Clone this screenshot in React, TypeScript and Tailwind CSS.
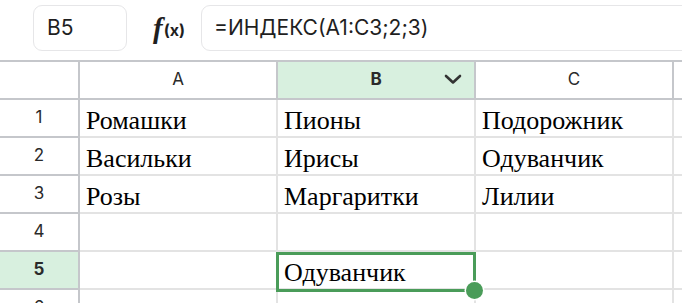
import React from "react";

const data: string[][] = [
  ["Ромашки", "Пионы", "Подорожник"],
  ["Васильки", "Ирисы", "Одуванчик"],
  ["Розы", "Маргаритки", "Лилии"],
  ["", "", ""],
  ["", "Одуванчик", ""],
  ["", "", ""],
];

function FxIcon() {
  return (
    <div className="w-[34px] h-[46px] flex items-center shrink-0 text-[#1f1f1f]">
      <span className="font-['Liberation_Serif'] italic font-bold text-[29px] leading-none">f</span>
      <span className="font-['Inter'] font-bold text-[16px] leading-none ml-[1px] mt-[3px]">(x)</span>
    </div>
  );
}

export default function App() {
  return (
    <div className="w-[682px] h-[303px] overflow-hidden bg-white font-['Inter',sans-serif] text-[#1f1f1f]">
      {/* toolbar */}
      <div className="h-[60px] flex items-start pt-[5px]">
        <div className="ml-[33px] w-[94px] h-[46px] shrink-0 rounded-[9px] border-[1.5px] border-[#e6e6e8] flex items-center pl-[13px] text-[21px]">
          B5
        </div>
        <div className="ml-[26px]">
          <FxIcon />
        </div>
        <div className="ml-[14px] w-[520px] h-[46px] shrink-0 rounded-[9px] border-[1.5px] border-[#e6e6e8] flex items-center pl-[12px] text-[21px]">
          =ИНДЕКС(A1:C3;2;3)
        </div>
      </div>

      {/* sheet */}
      <div className="relative border-t-2 border-[#c5c7cb]">
        {/* header row */}
        <div className="flex h-[38px]">
          <div className="w-[80px] shrink-0 border-r-2 border-b-2 border-[#c5c7cb]" />
          <div className="w-[198px] shrink-0 border-r-2 border-b-2 border-[#c5c7cb] flex items-center justify-center text-[17px] text-[#2a2a2a]">
            A
          </div>
          <div className="relative w-[198px] shrink-0 border-r-2 border-b-2 border-[#c5c7cb] bg-[#d8f0df] flex items-center justify-center text-[17px] font-bold text-[#2a2a2a]">
            B
            <svg
              className="absolute right-[12px] top-[12px]"
              width="18"
              height="11"
              viewBox="0 0 18 11"
              fill="none"
              stroke="#333"
              strokeWidth="2.6"
              strokeLinecap="round"
              strokeLinejoin="round"
            >
              <polyline points="2,2 9,8.5 16,2" />
            </svg>
          </div>
          <div className="w-[198px] shrink-0 border-r-2 border-b-2 border-[#c5c7cb] flex items-center justify-center text-[17px] text-[#2a2a2a]">
            C
          </div>
          <div className="w-[40px] shrink-0 border-b-2 border-[#c5c7cb]" />
        </div>

        {/* body rows */}
        {data.map((row, i) => {
          const selected = i === 4;
          return (
            <div key={i} className="flex h-[38px]">
              <div
                className={
                  selected
                    ? "w-[80px] shrink-0 border-r-2 border-b-2 border-[#c5c7cb] bg-[#d8f0df] flex items-center justify-center text-[17px] font-bold text-[#2a2a2a]"
                    : "w-[80px] shrink-0 border-r-2 border-b-2 border-[#c5c7cb] flex items-center justify-center text-[17px] text-[#2a2a2a]"
                }
              >
                {i + 1}
              </div>
              {row.map((cell, j) => (
                <div
                  key={j}
                  className="w-[198px] shrink-0 border-r-2 border-b-2 border-[#e3e3e3] flex items-end pl-[6px] pb-[2px] font-['Liberation_Serif',serif] text-[26px] leading-[27px] text-black"
                >
                  {cell}
                </div>
              ))}
              <div className="w-[40px] shrink-0 border-b-2 border-[#e3e3e3]" />
            </div>
          );
        })}

        {/* selection overlay */}
        <div className="absolute left-[276px] top-[190px] w-[200px] h-[40px] border-[3px] border-[#4a9c59] pointer-events-none" />
        <div className="absolute left-[466px] top-[220px] w-[17px] h-[17px] rounded-full bg-[#4a9c59] ring-[1.5px] ring-white" />
      </div>
    </div>
  );
}
